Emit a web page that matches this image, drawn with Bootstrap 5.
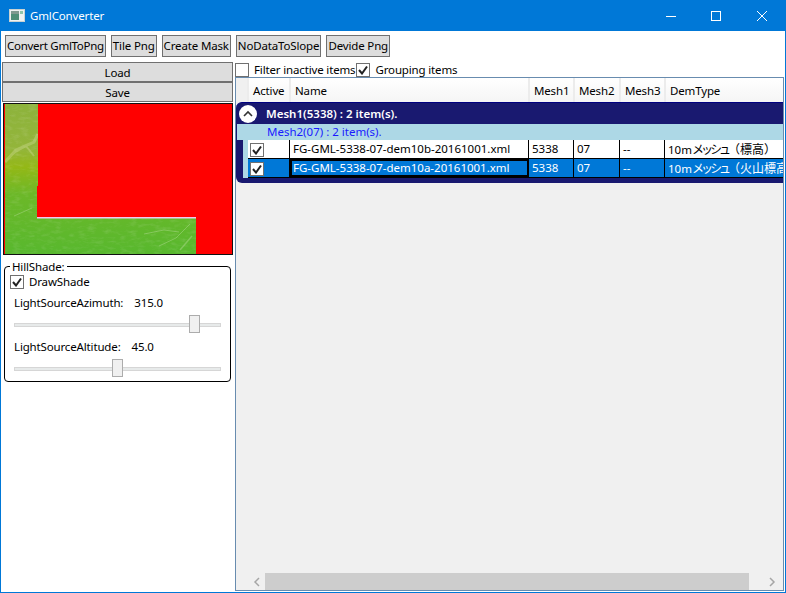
<!DOCTYPE html>
<html lang="ja">
<head>
  <meta charset="UTF-8" />
  <meta name="viewport" content="width=device-width, initial-scale=1.0" />
  <title>GmlConverter</title>
  <link href="https://cdn.jsdelivr.net/npm/bootstrap@5.3.3/dist/css/bootstrap.min.css" rel="stylesheet">
  <style>
    html, body { height: 100%; overflow: hidden; }
    body { font: 11.5px/16px "Noto Sans", "Noto Sans CJK JP", sans-serif; letter-spacing: -0.15px; color: #000; background: #fff; }
    .app-win { width: 786px; height: 593px; border: 1px solid #0078d7; border-top: 0; }
    .app-title { height: 31px; background: #0078d7; color: #fff; padding-left: 8px; }
    .app-title svg { flex: none; }
    .app-title .t { margin-left: 5px; }
    .win-btns { margin-left: auto; }
    .win-btn { width: 45px; height: 31px; padding-left: 17px; display: flex; align-items: center; }
    .win-btn.gap-after { margin-right: 1px; }
    .tool-row { height: 31px; padding: 4px 0 0 4px; gap: 5px; }
    .wpf-btn { background: #ddd; border: 1px solid #707070; height: 22px; line-height: 20px; padding: 0 1px; text-align: center; white-space: nowrap; }
    .tool-row .tight { letter-spacing: -0.28px; }
    .main-row { height: 530px; }
    .left-pane { width: 232px; padding-left: 1px; flex: none; }
    .left-pane .wpf-btn { height: 20px; line-height: 19px; }
    .terrain { display: block; margin: 1px 0 0 1px; width: 230px; height: 152px; border: 1px solid #111; }
    .hill-box { position: relative; margin: 11px 0 0 2px; width: 227px; height: 116px; border: 1px solid #000; border-radius: 4px; padding: 7px 5px 0 5px; }
    .hill-legend { position: absolute; top: -8px; left: 5px; background: #fff; padding: 0 3px 0 2px; }
    .hill-check { gap: 5px; }
    .wpf-check { width: 14px; height: 14px; border: 1px solid #707070; background: #fff; display: inline-flex; align-items: center; justify-content: center; flex: none; }
    .slide-lbl { padding-left: 4px; margin-top: 5px; }
    .slide-val { margin-left: 11px; }
    .slide-wrap { position: relative; height: 23px; margin: 0 4px; }
    .slide-track { position: absolute; top: 12px; left: 0; right: 0; height: 4px; background: #e7eaea; border: 1px solid #d6d6d6; }
    .slide-thumb { position: absolute; top: 4px; width: 11px; height: 18px; background: #f0f0f0; border: 1px solid #acacac; }
    .right-pane { width: 549px; margin-left: 2px; }
    .filter-row { height: 15px; gap: 1px; }
    .filter-row label { display: flex; gap: 5px; align-items: center; }
    .grid-box { width: 549px; height: 514px; border: 1px solid #688caf; background: #f0f0f0; position: relative; overflow: hidden; }
    .grid-head { height: 24px; background: #fff; }
    .grid-head div { flex: none; height: 24px; line-height: 25px; padding-left: 4px; border-right: 2px solid #ececec; background: linear-gradient(#fff, #f5f5f5); }
    .grid-head .c0 { background: #f0f0f0; }
    .c0 { width: 13px; } .c1 { width: 42px; } .c2 { width: 239px; } .c3 { width: 45px; } .c4 { width: 46px; } .c5 { width: 45px; } .c6 { width: 200px; }
    .grp { width: 547px; background: #191970; border-top: 1px solid #000080; border-radius: 6px 0 0 6px; padding-bottom: 5px; letter-spacing: 0; }
    .grp-head { height: 21px; color: #fff; font-weight: 600; padding-left: 3px; gap: 9px; }
    .grp-toggle { width: 18px; height: 18px; border-radius: 50%; background: #fff; display: flex; align-items: center; justify-content: center; }
    .grp-inner { margin-left: 1px; }
    .grp-sub { height: 16px; background: #add8e6; color: #1a1aff; padding-left: 30px; line-height: 16px; }
    .grp-rows { margin-left: 6px; background: #add8e6; }
    .data-row { height: 19px; margin-left: 5px; background: #fff; border-bottom: 1px solid #000; }
    .data-row > div { flex: none; height: 18px; line-height: 18px; padding-left: 3px; border-right: 1px solid #000; overflow: hidden; white-space: nowrap; }
    .data-row .c1 { padding: 2px 0 0 2px; }
    .data-row.sel { background: #0078d7; color: #fff; }
    .data-row .focus-cell { outline: 2px solid #000; outline-offset: -2px; }
    .kana { font-family: "Noto Sans CJK JP", sans-serif; font-size: 12px; }
    .kana-tight { letter-spacing: -3px; }
    .hbar { position: absolute; left: 0; right: 0; bottom: 0; height: 17px; background: #f0f0f0; }
    .hbar-thumb { position: absolute; left: 29px; top: 0; width: 484px; height: 17px; background: #cdcdcd; }
    .hbar svg { position: absolute; top: 4px; }
  </style>
</head>
<body>
  <div class="app-win d-flex flex-column">
    <div class="app-title d-flex align-items-center">
      <svg width="16" height="13" viewBox="0 0 16 13"><rect width="16" height="13" fill="#c9d2d2"/><rect x="1" y="1" width="14" height="11" fill="#eef2f2"/><rect x="2" y="2" width="8" height="9" fill="#4f8f78"/><rect x="2" y="2" width="8" height="3" fill="#7f9a90"/><rect x="11" y="2" width="3" height="3" fill="#8fc4aa"/></svg>
      <span class="t">GmlConverter</span>
      <div class="win-btns d-flex">
        <div class="win-btn"><svg width="10" height="10" viewBox="0 0 10 10"><path d="M0 5.5H10" stroke="#fff"/></svg></div>
        <div class="win-btn gap-after"><svg width="10" height="10" viewBox="0 0 10 10"><rect x="0.5" y="0.5" width="9" height="9" fill="none" stroke="#fff"/></svg></div>
        <div class="win-btn"><svg width="10" height="10" viewBox="0 0 10 10"><path d="M0 0L10 10M10 0L0 10" stroke="#fff"/></svg></div>
      </div>
    </div>

    <div class="tool-row d-flex">
      <div class="wpf-btn tight">Convert GmlToPng</div>
      <div class="wpf-btn">Tile Png</div>
      <div class="wpf-btn">Create Mask</div>
      <div class="wpf-btn">NoDataToSlope</div>
      <div class="wpf-btn">Devide Png</div>
    </div>

    <div class="main-row d-flex">
      <div class="left-pane">
        <div class="wpf-btn">Load</div>
        <div class="wpf-btn">Save</div>
        <svg class="terrain" viewBox="0 0 228 150" preserveAspectRatio="none">
          <defs>
            <linearGradient id="gr" x1="0" y1="0" x2="0" y2="1">
              <stop offset="0" stop-color="#8db33c"/>
              <stop offset="0.3" stop-color="#93b53a"/>
              <stop offset="0.42" stop-color="#94b816"/>
              <stop offset="0.6" stop-color="#6cb828"/>
              <stop offset="1" stop-color="#58b82e"/>
            </linearGradient>
            <filter id="rough"><feTurbulence type="fractalNoise" baseFrequency="0.12 0.3" numOctaves="3" seed="4"/><feColorMatrix values="0 0 0 0 1 0 0 0 0 1 0 0 0 0 1 1.6 0 0 0 -0.72"/></filter>
            <clipPath id="land"><path d="M1 0H34V82H33V114H192V150H1Z"/></clipPath>
          </defs>
          <rect width="228" height="150" fill="#f00"/>
          <path d="M1 0H34V82H33V114H192V150H1Z" fill="url(#gr)"/>
          <rect width="228" height="150" filter="url(#rough)" clip-path="url(#land)" opacity=".16"/>
          <g clip-path="url(#land)" fill="none" stroke="#d8e0a0" opacity=".35">
            <path d="M1 58L12 46L30 38L34 30" stroke-width="3"/>
            <path d="M8 50L22 42L30 52" stroke-width="2"/>
          </g>
          <g clip-path="url(#land)" fill="none" stroke="#b4dc96" opacity=".45">
            <path d="M155 142L172 134L186 120" stroke-width="1"/>
            <path d="M140 130L160 126L175 128" stroke-width="1"/>
            <path d="M176 146L188 132" stroke-width="1.5"/>
            <path d="M10 112L28 104" stroke-width="1"/>
          </g>
          <rect x="33" y="113" width="159" height="1.5" fill="#f2c8ee"/>
        </svg>
        <div class="hill-box">
          <div class="hill-legend">HillShade:</div>
          <label class="d-flex align-items-center hill-check">
            <span class="wpf-check"><svg width="10" height="10" viewBox="0 0 10 10"><path d="M1 5L4 8.5L9 1.5" fill="none" stroke="#222" stroke-width="2"/></svg></span>DrawShade
          </label>
          <div class="slide-lbl">LightSourceAzimuth:<span class="slide-val">315.0</span></div>
          <div class="slide-wrap"><div class="slide-track"></div><div class="slide-thumb" style="left:175px"></div></div>
          <div class="slide-lbl">LightSourceAltitude:<span class="slide-val">45.0</span></div>
          <div class="slide-wrap"><div class="slide-track"></div><div class="slide-thumb" style="left:98px"></div></div>
        </div>
      </div>

      <div class="right-pane">
        <div class="filter-row d-flex">
          <label><span class="wpf-check"></span>Filter inactive items</label>
          <label><span class="wpf-check"><svg width="10" height="10" viewBox="0 0 10 10"><path d="M1 5L4 8.5L9 1.5" fill="none" stroke="#222" stroke-width="2"/></svg></span>Grouping items</label>
        </div>
        <div class="grid-box">
          <div class="grid-head d-flex">
            <div class="c0"></div><div class="c1">Active</div><div class="c2">Name</div><div class="c3">Mesh1</div><div class="c4">Mesh2</div><div class="c5">Mesh3</div><div class="c6">DemType</div>
          </div>
          <div class="grp">
            <div class="grp-head d-flex align-items-center">
              <span class="grp-toggle"><svg width="10" height="8" viewBox="0 0 10 8"><path d="M1 6L5 2L9 6" fill="none" stroke="#333" stroke-width="1.6"/></svg></span>
              <span>Mesh1(5338) : 2 item(s).</span>
            </div>
            <div class="grp-inner">
              <div class="grp-sub">Mesh2(07) : 2 item(s).</div>
              <div class="grp-rows">
                <div class="data-row d-flex">
                  <div class="c1"><span class="wpf-check"><svg width="10" height="10" viewBox="0 0 10 10"><path d="M1 5L4 8.5L9 1.5" fill="none" stroke="#222" stroke-width="2"/></svg></span></div>
                  <div class="c2">FG-GML-5338-07-dem10b-20161001.xml</div><div class="c3">5338</div><div class="c4">07</div><div class="c5">--</div><div class="c6">10m<span class="kana"><span class="kana-tight">メッシュ</span>（標高）</span></div>
                </div>
                <div class="data-row sel d-flex">
                  <div class="c1"><span class="wpf-check"><svg width="10" height="10" viewBox="0 0 10 10"><path d="M1 5L4 8.5L9 1.5" fill="none" stroke="#222" stroke-width="2"/></svg></span></div>
                  <div class="c2 focus-cell">FG-GML-5338-07-dem10a-20161001.xml</div><div class="c3">5338</div><div class="c4">07</div><div class="c5">--</div><div class="c6">10m<span class="kana"><span class="kana-tight">メッシュ</span>（火山標高）</span></div>
                </div>
              </div>
            </div>
          </div>
          <div class="hbar">
            <svg style="left:17px" width="8" height="10" viewBox="0 0 8 10"><path d="M6 1L2 5L6 9" fill="none" stroke="#a6a6a6" stroke-width="1.5"/></svg>
            <div class="hbar-thumb"></div>
            <svg style="right:7px" width="8" height="10" viewBox="0 0 8 10"><path d="M2 1L6 5L2 9" fill="none" stroke="#a6a6a6" stroke-width="1.5"/></svg>
          </div>
        </div>
      </div>
    </div>
  </div>
  <script src="https://cdn.jsdelivr.net/npm/bootstrap@5.3.3/dist/js/bootstrap.bundle.min.js"></script>
</body>
</html>
